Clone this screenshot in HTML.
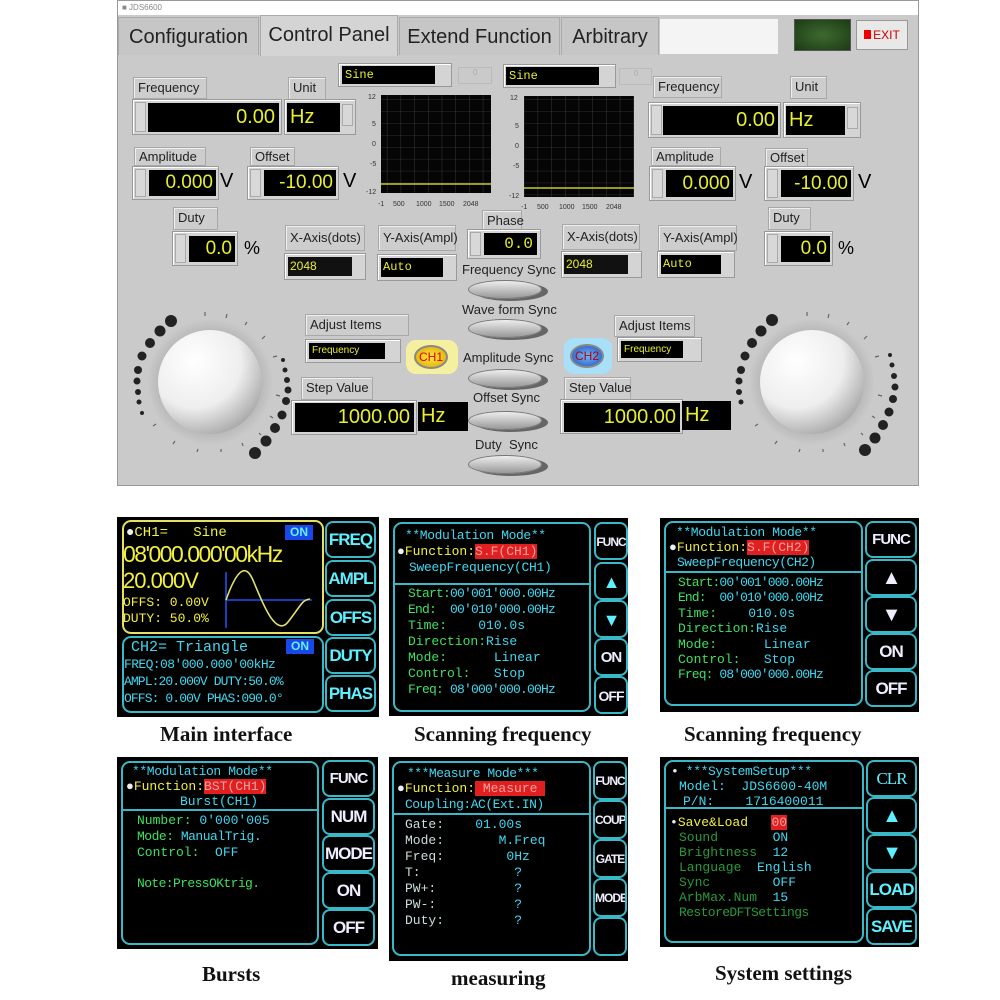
<!DOCTYPE html>
<html><head><meta charset="utf-8">
<style>
*{margin:0;padding:0;box-sizing:border-box}
body{width:1000px;height:1000px;background:#fff;position:relative;overflow:hidden;font-family:"Liberation Sans",sans-serif}
div,span{position:absolute}
.win{left:117px;top:0;width:802px;height:486px;background:#cacaca;border:1px solid #999}
.lbl{background:#cdcdcd;border:1px solid #a8a8a8;box-shadow:inset 1px 1px 0 #eee;font-size:13px;color:#222;padding:2px 4px;line-height:16px;white-space:nowrap}
.frame{background:#d4d4d4;border:1px solid #999;box-shadow:inset 1px 1px 0 #fff}
.blk{background:#000;color:#e8ee30;text-align:right;white-space:nowrap}
.spin{background:#d8d8d8;border:1px solid #aaa;width:11px}
.tab{top:17px;height:38px;background:#c6c6c6;border:1px solid #aaa;font-size:20px;color:#222;line-height:38px;text-align:center;border-bottom:none}
.sync{font-size:13px;color:#222;white-space:nowrap}
.oval{width:74px;height:19px;border-radius:50%;background:linear-gradient(#eee,#bbb 60%,#999);box-shadow:6px 2px 0 #666;border:1px solid #777}
.scr{background:#000}
.box{border:2px solid #39b8c8;border-radius:9px}
.btn{border:2px solid #39b8c8;border-radius:8px;color:#5ef0ff;font-weight:bold;font-size:17px;text-align:center;letter-spacing:-1px;overflow:hidden;white-space:nowrap}
.nb{font-size:12px;letter-spacing:-1px}
.m{font-family:"Liberation Mono",monospace;white-space:nowrap;font-size:14px;line-height:16px}
.cap{font-family:"Liberation Serif",serif;font-weight:bold;font-size:21px;color:#111;white-space:nowrap}
.g{color:#3ee060}.c{color:#40d8f0}.y{color:#f2f040}.w{color:#eee}
</style></head><body>
<div class="win"></div>
<div style="left:118px;top:1px;width:800px;height:14px;background:#fff;font-size:8px;color:#888;line-height:14px;padding-left:4px">■ JDS6600</div>
<div class="tab" style="left:118px;width:141px">Configuration</div>
<div class="tab" style="left:260px;width:138px;background:#d4d4d4;top:15px;height:41px">Control Panel</div>
<div class="tab" style="left:399px;width:161px">Extend Function</div>
<div class="tab" style="left:561px;width:98px">Arbitrary</div>
<div style="left:660px;top:19px;width:118px;height:35px;background:#f4f4f4"></div>
<div style="left:794px;top:19px;width:57px;height:32px;background:radial-gradient(#3d6a30,#1c3a14);border:1px solid #555"></div>
<div style="left:856px;top:20px;width:52px;height:30px;background:#e8e8e8;border:1px solid #999;font-size:12px;color:#c00;line-height:28px;text-align:center"><span style="position:static;display:inline-block;width:7px;height:9px;background:#e00;margin-right:2px"></span>EXIT</div>

<div class="lbl" style="left:133px;top:77px;width:74px">Frequency</div>
<div class="lbl" style="left:288px;top:77px;width:38px;height:23px">Unit</div>
<div class="frame" style="left:132px;top:99px;width:150px;height:36px"></div>
<div class="spin" style="left:135px;top:102px;height:30px"></div>
<div class="blk" style="left:148px;top:103px;width:131px;height:29px;font-size:20px;line-height:29px;padding-right:4px">0.00</div>
<div class="frame" style="left:284px;top:99px;width:72px;height:36px"></div>
<div class="blk" style="left:287px;top:103px;width:53px;height:29px;font-size:20px;line-height:29px;text-align:left;padding-left:3px">Hz</div>
<div class="spin" style="left:342px;top:104px;height:22px"></div>

<div class="lbl" style="left:134px;top:147px;width:72px;height:19px;line-height:13px">Amplitude</div>
<div class="lbl" style="left:250px;top:147px;width:45px;height:19px;line-height:13px">Offset</div>
<div class="frame" style="left:132px;top:166px;width:87px;height:34px"></div>
<div class="spin" style="left:135px;top:169px;height:28px"></div>
<div class="blk" style="left:149px;top:170px;width:67px;height:26px;font-size:19px;line-height:26px;padding-right:3px">0.000</div>
<div style="left:220px;top:170px;font-size:20px">V</div>
<div class="frame" style="left:247px;top:166px;width:92px;height:34px"></div>
<div class="spin" style="left:250px;top:169px;height:28px"></div>
<div class="blk" style="left:264px;top:170px;width:72px;height:26px;font-size:19px;line-height:26px;padding-right:3px">-10.00</div>
<div style="left:343px;top:170px;font-size:20px">V</div>

<div class="lbl" style="left:173px;top:207px;width:45px;height:23px">Duty</div>
<div class="frame" style="left:172px;top:231px;width:66px;height:35px"></div>
<div class="spin" style="left:175px;top:234px;height:29px"></div>
<div class="blk" style="left:189px;top:236px;width:46px;height:26px;font-size:19px;line-height:26px;padding-right:3px">0.0</div>
<div style="left:244px;top:238px;font-size:18px">%</div>

<div class="lbl" style="left:285px;top:225px;width:80px;height:26px;line-height:19px">X-Axis(dots)</div>
<div class="frame" style="left:284px;top:253px;width:82px;height:27px"></div>
<div class="blk" style="left:288px;top:257px;width:64px;height:19px;font-size:12px;line-height:19px;text-align:left;padding-left:2px;background:#111">2048</div>
<div class="lbl" style="left:378px;top:225px;width:78px;height:26px;line-height:19px">Y-Axis(Ampl)</div>
<div class="frame" style="left:377px;top:254px;width:80px;height:27px"></div>
<div class="blk" style="left:381px;top:258px;width:62px;height:19px;font-size:12px;line-height:19px;text-align:left;padding-left:2px;font-family:'Liberation Mono',monospace">Auto</div>

<div class="frame" style="left:338px;top:63px;width:114px;height:24px"></div>
<div class="blk" style="left:342px;top:66px;width:93px;height:18px;font-size:12px;line-height:18px;text-align:left;padding-left:3px;font-family:'Liberation Mono',monospace">Sine</div>
<div style="left:458px;top:67px;width:34px;height:17px;border:1px solid #bbb;font-size:8px;color:#aaa;padding-left:14px">0</div>
<div class="frame" style="left:503px;top:64px;width:113px;height:24px"></div>
<div class="blk" style="left:506px;top:67px;width:93px;height:18px;font-size:12px;line-height:18px;text-align:left;padding-left:3px;font-family:'Liberation Mono',monospace">Sine</div>
<div style="left:619px;top:68px;width:33px;height:17px;border:1px solid #bbb;font-size:8px;color:#aaa;padding-left:14px">0</div>

<svg style="position:absolute;left:360px;top:88px" width="290" height="125" font-family="Liberation Sans" font-size="7" fill="#333">
<defs><pattern id="gr" width="13.7" height="11.9" patternUnits="userSpaceOnUse"><path d="M13.7 0V11.9H0" fill="none" stroke="#555" stroke-width=".6"/></pattern></defs>
<rect x="21" y="7" width="110" height="98" fill="#050505"/><rect x="21" y="7" width="110" height="98" fill="url(#gr)"/>
<line x1="21" y1="96" x2="131" y2="96" stroke="#c8c830" stroke-width="1.5"/>
<rect x="164" y="8" width="110" height="101" fill="#050505"/><rect x="164" y="8" width="110" height="101" fill="url(#gr)"/>
<line x1="164" y1="100" x2="274" y2="100" stroke="#c8c830" stroke-width="1.5"/>
<text x="8" y="11">12</text><text x="12" y="38">5</text><text x="12" y="58">0</text><text x="10" y="78">-5</text><text x="6" y="106">-12</text>
<text x="18" y="118">-1</text><text x="33" y="118">500</text><text x="56" y="118">1000</text><text x="79" y="118">1500</text><text x="103" y="118">2048</text>
<text x="150" y="12">12</text><text x="155" y="40">5</text><text x="155" y="60">0</text><text x="153" y="80">-5</text><text x="149" y="110">-12</text>
<text x="161" y="121">-1</text><text x="177" y="121">500</text><text x="199" y="121">1000</text><text x="222" y="121">1500</text><text x="246" y="121">2048</text>
</svg>

<div class="lbl" style="left:482px;top:210px;width:40px;height:21px;line-height:15px">Phase</div>
<div class="frame" style="left:467px;top:229px;width:74px;height:30px"></div>
<div class="spin" style="left:470px;top:232px;height:24px"></div>
<div class="blk" style="left:484px;top:233px;width:53px;height:22px;font-size:16px;line-height:22px;padding-right:4px;font-family:'Liberation Mono',monospace">0.0</div>
<div class="sync" style="left:462px;top:262px">Frequency Sync</div>
<div class="oval" style="left:468px;top:280px"></div>
<div class="sync" style="left:462px;top:302px">Wave form Sync</div>
<div class="oval" style="left:468px;top:319px"></div>
<div class="sync" style="left:463px;top:350px">Amplitude Sync</div>
<div class="oval" style="left:468px;top:369px"></div>
<div class="sync" style="left:473px;top:390px">Offset Sync</div>
<div class="oval" style="left:468px;top:411px"></div>
<div class="sync" style="left:475px;top:437px">Duty &nbsp;Sync</div>
<div class="oval" style="left:468px;top:455px"></div>

<div class="lbl" style="left:653px;top:76px;width:69px">Frequency</div>
<div class="lbl" style="left:790px;top:76px;width:37px;height:23px">Unit</div>
<div class="frame" style="left:648px;top:102px;width:133px;height:36px"></div>
<div class="spin" style="left:651px;top:105px;height:30px"></div>
<div class="blk" style="left:663px;top:106px;width:115px;height:29px;font-size:20px;line-height:29px;padding-right:3px">0.00</div>
<div class="frame" style="left:783px;top:102px;width:78px;height:36px"></div>
<div class="blk" style="left:786px;top:106px;width:59px;height:29px;font-size:20px;line-height:29px;text-align:left;padding-left:3px">Hz</div>
<div class="spin" style="left:847px;top:107px;height:22px"></div>

<div class="lbl" style="left:651px;top:147px;width:70px;height:19px;line-height:13px">Amplitude</div>
<div class="lbl" style="left:765px;top:148px;width:43px;height:19px;line-height:13px">Offset</div>
<div class="frame" style="left:649px;top:166px;width:87px;height:35px"></div>
<div class="spin" style="left:652px;top:169px;height:29px"></div>
<div class="blk" style="left:666px;top:170px;width:67px;height:27px;font-size:19px;line-height:27px;padding-right:3px">0.000</div>
<div style="left:739px;top:171px;font-size:20px">V</div>
<div class="frame" style="left:764px;top:166px;width:90px;height:35px"></div>
<div class="spin" style="left:767px;top:169px;height:29px"></div>
<div class="blk" style="left:781px;top:170px;width:70px;height:27px;font-size:19px;line-height:27px;padding-right:3px">-10.00</div>
<div style="left:858px;top:171px;font-size:20px">V</div>

<div class="lbl" style="left:768px;top:207px;width:43px;height:23px">Duty</div>
<div class="frame" style="left:764px;top:231px;width:69px;height:35px"></div>
<div class="spin" style="left:767px;top:234px;height:29px"></div>
<div class="blk" style="left:781px;top:236px;width:49px;height:26px;font-size:19px;line-height:26px;padding-right:3px">0.0</div>
<div style="left:838px;top:238px;font-size:18px">%</div>

<div class="lbl" style="left:562px;top:224px;width:78px;height:26px;line-height:19px">X-Axis(dots)</div>
<div class="frame" style="left:561px;top:251px;width:81px;height:27px"></div>
<div class="blk" style="left:564px;top:255px;width:64px;height:19px;font-size:12px;line-height:19px;text-align:left;padding-left:2px;background:#111">2048</div>
<div class="lbl" style="left:658px;top:225px;width:79px;height:26px;line-height:19px">Y-Axis(Ampl)</div>
<div class="frame" style="left:657px;top:251px;width:78px;height:27px"></div>
<div class="blk" style="left:661px;top:255px;width:60px;height:19px;font-size:12px;line-height:19px;text-align:left;padding-left:2px;font-family:'Liberation Mono',monospace">Auto</div>

<div class="lbl" style="left:305px;top:314px;width:104px;height:22px">Adjust Items</div>
<div class="frame" style="left:305px;top:339px;width:96px;height:24px"></div>
<div class="blk" style="left:309px;top:343px;width:76px;height:16px;font-size:10px;line-height:16px;text-align:left;padding-left:3px">Frequency</div>
<div style="left:406px;top:340px;width:52px;height:34px;background:#f4f0a0;border-radius:10px"></div>
<div style="left:414px;top:345px;width:34px;height:24px;border-radius:50%;background:radial-gradient(#ffe840,#d8a800);border:2px solid #888;color:#d00;font-size:12px;text-align:center;line-height:20px">CH1</div>
<div class="lbl" style="left:301px;top:377px;width:72px;height:23px">Step Value</div>
<div class="frame" style="left:291px;top:400px;width:126px;height:35px"></div>
<div class="blk" style="left:295px;top:403px;width:119px;height:29px;font-size:20px;line-height:29px;padding-right:4px">1000.00</div>
<div class="blk" style="left:418px;top:402px;width:50px;height:29px;font-size:20px;line-height:29px;text-align:left;padding-left:3px">Hz</div>

<div class="lbl" style="left:614px;top:315px;width:81px;height:22px">Adjust Items</div>
<div style="left:564px;top:338px;width:48px;height:36px;background:#a8e0f8;border-radius:10px"></div>
<div style="left:570px;top:344px;width:34px;height:24px;border-radius:50%;background:radial-gradient(#70b8f8,#2050c0);border:2px solid #888;color:#b00;font-size:12px;text-align:center;line-height:20px">CH2</div>
<div class="frame" style="left:617px;top:337px;width:85px;height:25px"></div>
<div class="blk" style="left:621px;top:341px;width:62px;height:17px;font-size:10px;line-height:17px;text-align:left;padding-left:3px">Frequency</div>
<div class="lbl" style="left:564px;top:377px;width:67px;height:23px">Step Value</div>
<div class="frame" style="left:560px;top:399px;width:123px;height:35px"></div>
<div class="blk" style="left:564px;top:403px;width:116px;height:29px;font-size:20px;line-height:29px;padding-right:4px">1000.00</div>
<div class="blk" style="left:682px;top:401px;width:49px;height:29px;font-size:20px;line-height:29px;text-align:left;padding-left:3px">Hz</div>

<svg style="position:absolute;left:117px;top:300px" width="802" height="170">
<defs>
<radialGradient id="kn" cx="0.35" cy="0.3" r="0.75"><stop offset="0" stop-color="#fff"/><stop offset="0.6" stop-color="#eee"/><stop offset="1" stop-color="#aaa"/></radialGradient>
<radialGradient id="ha" r="0.5"><stop offset="0.8" stop-color="#b8b8b8"/><stop offset="1" stop-color="#cacaca"/></radialGradient>
</defs>
<g fill="#222">
<circle cx="54" cy="21" r="6"/><circle cx="43" cy="31" r="5.5"/><circle cx="33" cy="43" r="5"/><circle cx="25" cy="56" r="4.5"/><circle cx="21" cy="70" r="4"/><circle cx="20" cy="81" r="3.5"/><circle cx="21" cy="92" r="3"/><circle cx="22" cy="102" r="2.5"/><circle cx="25" cy="113" r="2"/>
<circle cx="166" cy="60" r="2"/><circle cx="168" cy="70" r="2.5"/><circle cx="170" cy="80" r="3"/><circle cx="171" cy="90" r="3.5"/><circle cx="169" cy="101" r="4"/><circle cx="165" cy="115" r="4.5"/><circle cx="158" cy="128" r="5"/><circle cx="149" cy="141" r="5.5"/><circle cx="138" cy="153" r="6"/>
<circle cx="655" cy="20" r="6"/><circle cx="644" cy="31" r="5.5"/><circle cx="635" cy="43" r="5"/><circle cx="628" cy="56" r="4.5"/><circle cx="624" cy="70" r="4"/><circle cx="622" cy="81" r="3.5"/><circle cx="622" cy="92" r="3"/><circle cx="624" cy="102" r="2.5"/>
<circle cx="773" cy="55" r="2"/><circle cx="775" cy="65" r="2.5"/><circle cx="777" cy="76" r="3"/><circle cx="778" cy="87" r="3.5"/><circle cx="776" cy="99" r="4"/><circle cx="772" cy="112" r="4.5"/><circle cx="766" cy="125" r="5"/><circle cx="758" cy="138" r="5.5"/><circle cx="748" cy="150" r="6"/>
</g>
<circle cx="93" cy="82" r="63" fill="url(#ha)"/><circle cx="93" cy="82" r="52" fill="url(#kn)"/>
<circle cx="695" cy="82" r="63" fill="url(#ha)"/><circle cx="695" cy="82" r="52" fill="url(#kn)"/>
<g stroke="#666" stroke-width="1.2">
<path d="M88 12v4M110 14l-1 4M130 22l-2 3M148 36l-3 3M160 56l-4 1M163 96l-4-1M156 118l-3-2M144 135l-2-2M126 146l-1-3M104 152v-3M80 152l1-3M56 144l2-3M36 126l3-2"/>
<path d="M690 12v4M712 14l-1 4M732 22l-2 3M750 36l-3 3M762 56l-4 1M765 96l-4-1M758 118l-3-2M746 135l-2-2M728 146l-1-3M706 152v-3M682 152l1-3M658 144l2-3M638 126l3-2"/>
</g>
</svg>

<!-- 1 main -->
<div class="scr" style="left:117px;top:517px;width:262px;height:200px"></div>
<div class="box" style="left:122px;top:520px;width:202px;height:114px;border-color:#e8e060"></div>
<div class="box" style="left:122px;top:636px;width:202px;height:77px"></div>
<div class="m w" style="left:126px;top:525px">●<span class="y" style="position:static">CH1=&nbsp;&nbsp;&nbsp;Sine</span></div>
<div style="left:285px;top:525px;width:28px;height:15px;background:#1848e8;color:#6ef;font-size:12px;text-align:center;line-height:15px;font-weight:bold">ON</div>
<div class="y" style="left:123px;top:541px;font-size:23px;letter-spacing:-1.5px;white-space:nowrap">08'000.000'00kHz</div>
<div class="y" style="left:123px;top:568px;font-size:22px;letter-spacing:-1px">20.000V</div>
<div class="m y" style="left:123px;top:595px;font-size:13px">OFFS: 0.00V</div>
<div class="m y" style="left:123px;top:611px;font-size:13px">DUTY: 50.0%</div>
<svg style="position:absolute;left:222px;top:570px" width="95" height="60"><path d="M4 30H90M4 58V2" stroke="#2050f0" stroke-width="1.6" fill="none"/><path d="M4 30C16 -4 24 -4 30 8S52 70 66 52 80 30 88 29" stroke="#e0e070" stroke-width="1.6" fill="none"/></svg>
<div class="m c" style="left:131px;top:640px;font-size:15px">CH2= Triangle</div>
<div style="left:286px;top:639px;width:28px;height:15px;background:#1848e8;color:#6ef;font-size:12px;text-align:center;line-height:15px;font-weight:bold">ON</div>
<div class="m c" style="left:124px;top:657px;font-size:13px;letter-spacing:-.6px">FREQ:08'000.000'00kHz</div>
<div class="m c" style="left:124px;top:674px;font-size:13px;letter-spacing:-.9px">AMPL:20.000V DUTY:50.0%</div>
<div class="m c" style="left:124px;top:691px;font-size:13px;letter-spacing:-.9px">OFFS: 0.00V PHAS:090.0°</div>
<div class="btn" style="left:325px;top:521px;width:51px;height:37px;line-height:34px">FREQ</div>
<div class="btn" style="left:325px;top:560px;width:51px;height:37px;line-height:34px">AMPL</div>
<div class="btn" style="left:325px;top:599px;width:51px;height:37px;line-height:34px">OFFS</div>
<div class="btn" style="left:325px;top:637px;width:51px;height:37px;line-height:34px">DUTY</div>
<div class="btn" style="left:325px;top:675px;width:51px;height:37px;line-height:34px">PHAS</div>
<div class="cap" style="left:160px;top:722px">Main interface</div>

<!-- 2 sweep CH1 -->
<div class="scr" style="left:389px;top:518px;width:239px;height:198px"></div>
<div class="box" style="left:393px;top:522px;width:198px;height:190px"></div>
<div style="left:393px;top:583px;width:198px;height:2px;background:#39b8c8"></div>
<div class="m c" style="left:405px;top:528px;font-size:13px;letter-spacing:-.4px">**Modulation Mode**</div>
<div class="m w" style="left:397px;top:544px;font-size:13px">●<span class="y" style="position:static">Function:</span><span style="position:static;background:#e02020;color:#f8a0a0">S.F(CH1)</span></div>
<div class="m c" style="left:409px;top:560px;font-size:13px;letter-spacing:-.3px">SweepFrequency(CH1)</div>
<div class="m g" style="left:408px;top:586px;font-size:13px;letter-spacing:-.8px">Start:<span class="c" style="position:static">00'001'000.00Hz</span></div>
<div class="m g" style="left:408px;top:602px;font-size:13px;letter-spacing:-.8px">End:&nbsp;&nbsp;<span class="c" style="position:static">00'010'000.00Hz</span></div>
<div class="m g" style="left:408px;top:618px;font-size:13px">Time:&nbsp;&nbsp;&nbsp;&nbsp;<span class="c" style="position:static">010.0s</span></div>
<div class="m g" style="left:408px;top:634px;font-size:13px">Direction:<span class="c" style="position:static">Rise</span></div>
<div class="m g" style="left:408px;top:650px;font-size:13px">Mode:&nbsp;&nbsp;&nbsp;&nbsp;&nbsp;&nbsp;<span class="c" style="position:static">Linear</span></div>
<div class="m g" style="left:408px;top:666px;font-size:13px">Control:&nbsp;&nbsp;&nbsp;<span class="c" style="position:static">Stop</span></div>
<div class="m g" style="left:408px;top:682px;font-size:13px;letter-spacing:-.8px">Freq: <span class="c" style="position:static">08'000'000.00Hz</span></div>
<div class="btn nb" style="left:594px;top:522px;width:34px;height:38px;line-height:36px;color:#eef">FUNC</div>
<div class="btn" style="left:594px;top:562px;width:34px;height:38px;line-height:36px;font-size:18px">▲</div>
<div class="btn" style="left:594px;top:600px;width:34px;height:38px;line-height:36px;font-size:18px">▼</div>
<div class="btn" style="left:594px;top:638px;width:34px;height:38px;line-height:36px;font-size:15px;color:#eef">ON</div>
<div class="btn" style="left:594px;top:676px;width:34px;height:38px;line-height:36px;font-size:14px;color:#eef">OFF</div>
<div class="cap" style="left:414px;top:722px">Scanning frequency</div>

<!-- 3 sweep CH2 -->
<div class="scr" style="left:660px;top:518px;width:259px;height:194px"></div>
<div class="box" style="left:664px;top:521px;width:199px;height:185px"></div>
<div style="left:664px;top:571px;width:199px;height:2px;background:#39b8c8"></div>
<div class="m c" style="left:676px;top:525px;font-size:13px;letter-spacing:-.4px">**Modulation Mode**</div>
<div class="m w" style="left:669px;top:540px;font-size:13px">●<span class="y" style="position:static">Function:</span><span style="position:static;background:#e02020;color:#f8a0a0">S.F(CH2)</span></div>
<div class="m c" style="left:677px;top:555px;font-size:13px;letter-spacing:-.5px">SweepFrequency(CH2)</div>
<div class="m g" style="left:678px;top:575px;font-size:13px;letter-spacing:-.9px">Start:<span class="c" style="position:static">00'001'000.00Hz</span></div>
<div class="m g" style="left:678px;top:590px;font-size:13px;letter-spacing:-.9px">End:&nbsp;&nbsp;<span class="c" style="position:static">00'010'000.00Hz</span></div>
<div class="m g" style="left:678px;top:606px;font-size:13px">Time:&nbsp;&nbsp;&nbsp;&nbsp;<span class="c" style="position:static">010.0s</span></div>
<div class="m g" style="left:678px;top:621px;font-size:13px">Direction:<span class="c" style="position:static">Rise</span></div>
<div class="m g" style="left:678px;top:637px;font-size:13px">Mode:&nbsp;&nbsp;&nbsp;&nbsp;&nbsp;&nbsp;<span class="c" style="position:static">Linear</span></div>
<div class="m g" style="left:678px;top:652px;font-size:13px">Control:&nbsp;&nbsp;&nbsp;<span class="c" style="position:static">Stop</span></div>
<div class="m g" style="left:678px;top:667px;font-size:13px;letter-spacing:-.9px">Freq: <span class="c" style="position:static">08'000'000.00Hz</span></div>
<div class="btn" style="left:865px;top:521px;width:52px;height:37px;line-height:34px;font-size:15px;color:#eef">FUNC</div>
<div class="btn" style="left:865px;top:559px;width:52px;height:37px;line-height:34px;font-size:20px;color:#eef">▲</div>
<div class="btn" style="left:865px;top:596px;width:52px;height:37px;line-height:34px;font-size:20px;color:#eef">▼</div>
<div class="btn" style="left:865px;top:633px;width:52px;height:37px;line-height:34px;color:#eef">ON</div>
<div class="btn" style="left:865px;top:670px;width:52px;height:37px;line-height:34px;color:#eef">OFF</div>
<div class="cap" style="left:684px;top:722px">Scanning frequency</div>

<!-- 4 burst -->
<div class="scr" style="left:117px;top:757px;width:261px;height:192px"></div>
<div class="box" style="left:121px;top:761px;width:198px;height:184px"></div>
<div style="left:121px;top:809px;width:198px;height:2px;background:#39b8c8"></div>
<div class="m c" style="left:132px;top:764px;font-size:13px;letter-spacing:-.4px">**Modulation Mode**</div>
<div class="m w" style="left:126px;top:779px;font-size:13px">●<span class="y" style="position:static">Function:</span><span style="position:static;background:#e02020;color:#f8a0a0">BST(CH1)</span></div>
<div class="m c" style="left:180px;top:794px;font-size:13px">Burst(CH1)</div>
<div class="m g" style="left:137px;top:813px;font-size:13px">Number:&nbsp;<span class="c" style="position:static">0'000'005</span></div>
<div class="m g" style="left:137px;top:829px;font-size:13px;letter-spacing:-.5px">Mode: <span class="c" style="position:static">ManualTrig.</span></div>
<div class="m g" style="left:137px;top:845px;font-size:13px">Control:&nbsp;&nbsp;<span class="c" style="position:static">OFF</span></div>
<div class="m g" style="left:137px;top:876px;font-size:13px;letter-spacing:-.6px">Note:PressOKtrig.</div>
<div class="btn" style="left:322px;top:760px;width:53px;height:37px;line-height:34px;font-size:15px;color:#eef">FUNC</div>
<div class="btn" style="left:322px;top:798px;width:53px;height:37px;line-height:34px;color:#eef">NUM</div>
<div class="btn" style="left:322px;top:835px;width:53px;height:37px;line-height:34px;color:#eef">MODE</div>
<div class="btn" style="left:322px;top:872px;width:53px;height:37px;line-height:34px;color:#eef">ON</div>
<div class="btn" style="left:322px;top:909px;width:53px;height:37px;line-height:34px;color:#eef">OFF</div>
<div class="cap" style="left:202px;top:962px">Bursts</div>

<!-- 5 measure -->
<div class="scr" style="left:389px;top:757px;width:239px;height:204px"></div>
<div class="box" style="left:392px;top:761px;width:199px;height:195px"></div>
<div style="left:392px;top:813px;width:199px;height:2px;background:#39b8c8"></div>
<div class="m c" style="left:407px;top:766px;font-size:13px;letter-spacing:-.5px">***Measure Mode***</div>
<div class="m w" style="left:397px;top:781px;font-size:13px">●<span class="y" style="position:static">Function:</span><span style="position:static;background:#e02020;color:#f8a0a0">&nbsp;Measure&nbsp;</span></div>
<div class="m c" style="left:405px;top:797px;font-size:13px;letter-spacing:-.5px">Coupling:AC(Ext.IN)</div>
<div class="m" style="left:405px;top:817px;font-size:13px;color:#cdd">Gate:&nbsp;&nbsp;&nbsp;&nbsp;<span class="c" style="position:static">01.00s</span></div>
<div class="m" style="left:405px;top:833px;font-size:13px;color:#cdd">Mode:&nbsp;&nbsp;&nbsp;&nbsp;&nbsp;&nbsp;&nbsp;<span class="c" style="position:static">M.Freq</span></div>
<div class="m" style="left:405px;top:849px;font-size:13px;color:#cdd">Freq:&nbsp;&nbsp;&nbsp;&nbsp;&nbsp;&nbsp;&nbsp;&nbsp;<span class="c" style="position:static">0Hz</span></div>
<div class="m" style="left:405px;top:865px;font-size:13px;color:#cdd">T:&nbsp;&nbsp;&nbsp;&nbsp;&nbsp;&nbsp;&nbsp;&nbsp;&nbsp;&nbsp;&nbsp;&nbsp;<span class="c" style="position:static">?</span></div>
<div class="m" style="left:405px;top:881px;font-size:13px;color:#cdd">PW+:&nbsp;&nbsp;&nbsp;&nbsp;&nbsp;&nbsp;&nbsp;&nbsp;&nbsp;&nbsp;<span class="c" style="position:static">?</span></div>
<div class="m" style="left:405px;top:897px;font-size:13px;color:#cdd">PW-:&nbsp;&nbsp;&nbsp;&nbsp;&nbsp;&nbsp;&nbsp;&nbsp;&nbsp;&nbsp;<span class="c" style="position:static">?</span></div>
<div class="m" style="left:405px;top:913px;font-size:13px;color:#cdd">Duty:&nbsp;&nbsp;&nbsp;&nbsp;&nbsp;&nbsp;&nbsp;&nbsp;&nbsp;<span class="c" style="position:static">?</span></div>
<div class="btn nb" style="left:593px;top:761px;width:34px;height:39px;line-height:36px;color:#eef">FUNC</div>
<div class="btn nb" style="left:593px;top:800px;width:34px;height:39px;line-height:36px;color:#eef">COUP</div>
<div class="btn nb" style="left:593px;top:839px;width:34px;height:39px;line-height:36px;color:#eef">GATE</div>
<div class="btn nb" style="left:593px;top:878px;width:34px;height:39px;line-height:36px;color:#eef">MODE</div>
<div class="btn" style="left:593px;top:917px;width:34px;height:39px"></div>
<div class="cap" style="left:451px;top:966px">measuring</div>

<!-- 6 system -->
<div class="scr" style="left:660px;top:757px;width:259px;height:190px"></div>
<div class="box" style="left:664px;top:760px;width:200px;height:183px"></div>
<div style="left:664px;top:807px;width:200px;height:2px;background:#39b8c8"></div>
<div class="m c" style="left:671px;top:764px;font-size:13px;letter-spacing:-.4px"><span class="w" style="position:static">•</span> ***SystemSetup***</div>
<div class="m c" style="left:679px;top:779px;font-size:13px">Model:&nbsp;&nbsp;JDS6600-40M</div>
<div class="m c" style="left:683px;top:794px;font-size:13px">P/N:&nbsp;&nbsp;&nbsp;&nbsp;1716400011</div>
<div class="m y" style="left:670px;top:815px;font-size:13px"><span class="w" style="position:static">•</span>Save&amp;Load&nbsp;&nbsp;&nbsp;<span style="position:static;background:#e02020;color:#f8a0a0">00</span></div>
<div class="m" style="left:679px;top:830px;font-size:13px;color:#2a9a3a">Sound&nbsp;&nbsp;&nbsp;&nbsp;&nbsp;&nbsp;&nbsp;<span class="c" style="position:static">ON</span></div>
<div class="m" style="left:679px;top:845px;font-size:13px;color:#2a9a3a">Brightness&nbsp;&nbsp;<span class="c" style="position:static">12</span></div>
<div class="m" style="left:679px;top:860px;font-size:13px;color:#2a9a3a">Language&nbsp;&nbsp;<span class="c" style="position:static">English</span></div>
<div class="m" style="left:679px;top:875px;font-size:13px;color:#2a9a3a">Sync&nbsp;&nbsp;&nbsp;&nbsp;&nbsp;&nbsp;&nbsp;&nbsp;<span class="c" style="position:static">OFF</span></div>
<div class="m" style="left:679px;top:890px;font-size:13px;color:#2a9a3a">ArbMax.Num&nbsp;&nbsp;<span class="c" style="position:static">15</span></div>
<div class="m" style="left:679px;top:905px;font-size:13px;color:#2a9a3a;letter-spacing:-.6px">RestoreDFTSettings</div>
<div class="btn" style="left:866px;top:760px;width:51px;height:37px;line-height:34px;font-weight:normal;font-family:'Liberation Serif',serif;color:#5ef0ff">CLR</div>
<div class="btn" style="left:866px;top:797px;width:51px;height:37px;line-height:34px;font-size:20px">▲</div>
<div class="btn" style="left:866px;top:834px;width:51px;height:37px;line-height:34px;font-size:20px">▼</div>
<div class="btn" style="left:866px;top:871px;width:51px;height:37px;line-height:34px">LOAD</div>
<div class="btn" style="left:866px;top:908px;width:51px;height:37px;line-height:34px">SAVE</div>
<div class="cap" style="left:715px;top:961px">System settings</div>
</body></html>
